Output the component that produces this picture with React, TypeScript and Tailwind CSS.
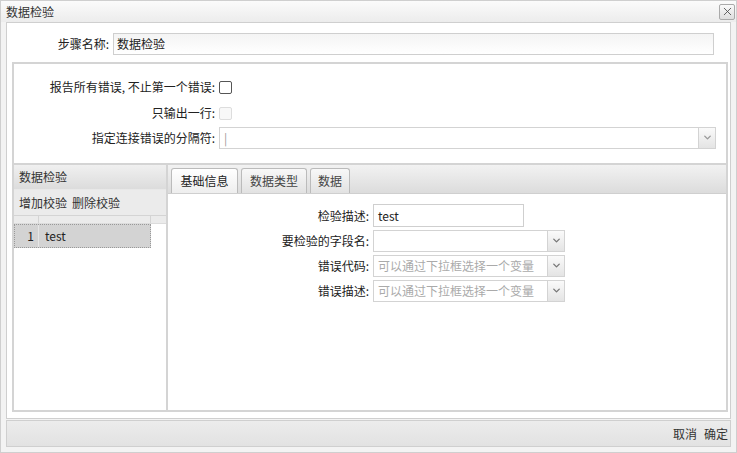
import { ChevronDown, X } from "lucide-react";

const font = { fontFamily: '"Noto Sans CJK SC", "Liberation Sans", sans-serif' };

function Combo({ width, placeholder }: { width: string; placeholder?: string }) {
  return (
    <div className={`flex h-[22px] ${width} border border-[#d3d3d3] bg-white`}>
      <div className="flex-1 px-[4px] leading-[20px] text-[#aaa] overflow-hidden whitespace-nowrap">
        {placeholder}
      </div>
      <div className="flex w-[17px] items-center justify-center border-l border-[#d3d3d3] bg-gradient-to-b from-[#fafafa] to-[#e4e4e4]">
        <ChevronDown size={11} strokeWidth={3} className="text-[#777]" />
      </div>
    </div>
  );
}

function FormRow({ label, h, children }: { label: string; h: string; children: React.ReactNode }) {
  return (
    <div className={`flex items-center ${h}`}>
      <div className="w-[205px] text-right pr-[4px] text-[#222]">{label}</div>
      {children}
    </div>
  );
}

export default function App() {
  return (
    <div style={font} className="w-[737px] h-[453px] flex flex-col bg-[#f3f3f3] text-[12px] text-[#222] border border-[#cfcfcf]">
      {/* title bar */}
      <div className="flex h-[21px] items-center justify-between bg-gradient-to-b from-[#fbfbfb] to-[#ececec] pl-[5px] pr-[1px]">
        <span className="text-[12px] text-[#333]">数据检验</span>
        <div className="flex h-[16px] w-[16px] items-center justify-center rounded-[2px] border border-[#aaa] bg-gradient-to-b from-[#fafafa] to-[#dedede]">
          <X size={13} strokeWidth={1.5} className="text-[#444]" />
        </div>
      </div>

      {/* body */}
      <div className="ml-[5px] mr-[5px] flex flex-1 flex-col border border-[#cfcfcf] bg-white pl-[5px] pr-[2px] pb-[6px]">
        <div className="flex items-center pt-[10px]">
          <div className="w-[101px] text-right pr-[4px]">步骤名称:</div>
          <div className="h-[22px] w-[601px] border border-[#cfcfcf] bg-gradient-to-b from-[#f4f4f4] to-white leading-[20px] px-[3px]">
            数据检验
          </div>
        </div>

        {/* options */}
        <div className="mt-[7px] h-[101px] border-2 border-b-0 border-[#d4d4d4] pt-[10px]">
          <FormRow label="报告所有错误, 不止第一个错误:" h="h-[26px]">
            <div className="h-[13px] w-[13px] rounded-[2px] border border-[#555] bg-white" />
          </FormRow>
          <FormRow label="只输出一行:" h="h-[26px]">
            <div className="h-[13px] w-[13px] rounded-[2px] border border-[#ddd] bg-[#f8f8f8]" />
          </FormRow>
          <FormRow label="指定连接错误的分隔符:" h="h-[23px]">
            <div className="flex h-[22px] w-[497px] border border-[#d3d3d3] bg-white">
              <div className="flex-1 px-[4px] leading-[20px] text-[#999]">|</div>
              <div className="flex w-[17px] items-center justify-center border-l border-[#d3d3d3] bg-gradient-to-b from-[#fafafa] to-[#e4e4e4]">
                <ChevronDown size={11} strokeWidth={3} className="text-[#999]" />
              </div>
            </div>
          </FormRow>
        </div>

        {/* split */}
        <div className="flex flex-1 border-2 border-[#d4d4d4]">
          <div className="flex w-[154px] flex-col border-r-2 border-[#d4d4d4]">
            <div className="flex h-[25px] items-center bg-gradient-to-b from-[#f0f0f0] to-[#dcdcdc] pl-[5px] text-[#333] border-b border-[#e8e8e8]">
              数据检验
            </div>
            <div className="flex h-[26px] items-center gap-[5px] bg-[#ebebeb] pl-[5px] border-b border-[#d4d4d4] text-[#333]">
              <span>增加校验</span>
              <span>删除校验</span>
            </div>
            <div className="flex h-[8px] bg-[#ebebeb] border-b border-[#dcdcdc]">
              <div className="w-[25px] border-r border-[#d4d4d4]" />
              <div className="w-[112px] border-r border-[#d4d4d4]" />
            </div>
            <div className="flex h-[24px] w-[137px] border border-dotted border-[#999] bg-[#d3d3d3]">
              <div className="w-[24px] text-right pr-[4px] leading-[22px] border-r border-[#e6e6e6]">1</div>
              <div className="pl-[6px] leading-[22px]">test</div>
            </div>
          </div>

          <div className="flex flex-1 flex-col">
            <div className="flex h-[29px] items-end gap-[3px] bg-gradient-to-b from-[#f2f2f2] to-[#dcdcdc] pl-[3px] border-b border-[#cfcfcf]">
              <div className="flex h-[25px] w-[67px] items-center justify-center rounded-t-[3px] border border-b-0 border-[#bbb] bg-gradient-to-b from-white to-[#eeeeee] text-[#222]">
                基础信息
              </div>
              <div className="flex h-[25px] w-[66px] items-center justify-center rounded-t-[3px] border border-b-0 border-[#bbb] bg-gradient-to-b from-[#f8f8f8] to-[#e2e2e2] text-[#444]">
                数据类型
              </div>
              <div className="flex h-[25px] w-[40px] items-center justify-center rounded-t-[3px] border border-b-0 border-[#bbb] bg-gradient-to-b from-[#f8f8f8] to-[#e2e2e2] text-[#444]">
                数据
              </div>
            </div>
            <div className="flex flex-col pt-[9px]">
              <FormRow label="检验描述:" h="h-[25px]">
                <div className="h-[23px] w-[151px] border border-[#cfcfcf] bg-white px-[4px] leading-[21px]">test</div>
              </FormRow>
              <FormRow label="要检验的字段名:" h="h-[25px]">
                <Combo width="w-[192px]" />
              </FormRow>
              <FormRow label="错误代码:" h="h-[25px]">
                <Combo width="w-[192px]" placeholder="可以通过下拉框选择一个变量" />
              </FormRow>
              <FormRow label="错误描述:" h="h-[25px]">
                <Combo width="w-[192px]" placeholder="可以通过下拉框选择一个变量" />
              </FormRow>
            </div>
          </div>
        </div>
      </div>

      {/* footer */}
      <div className="mx-[5px] mb-[5px] mt-[1px] flex h-[27px] items-center justify-end gap-[7px] border border-[#cfcfcf] bg-gradient-to-b from-[#ececec] to-[#e2e2e2] pr-[2px] text-[#333]">
        <span>取消</span>
        <span>确定</span>
      </div>
    </div>
  );
}
